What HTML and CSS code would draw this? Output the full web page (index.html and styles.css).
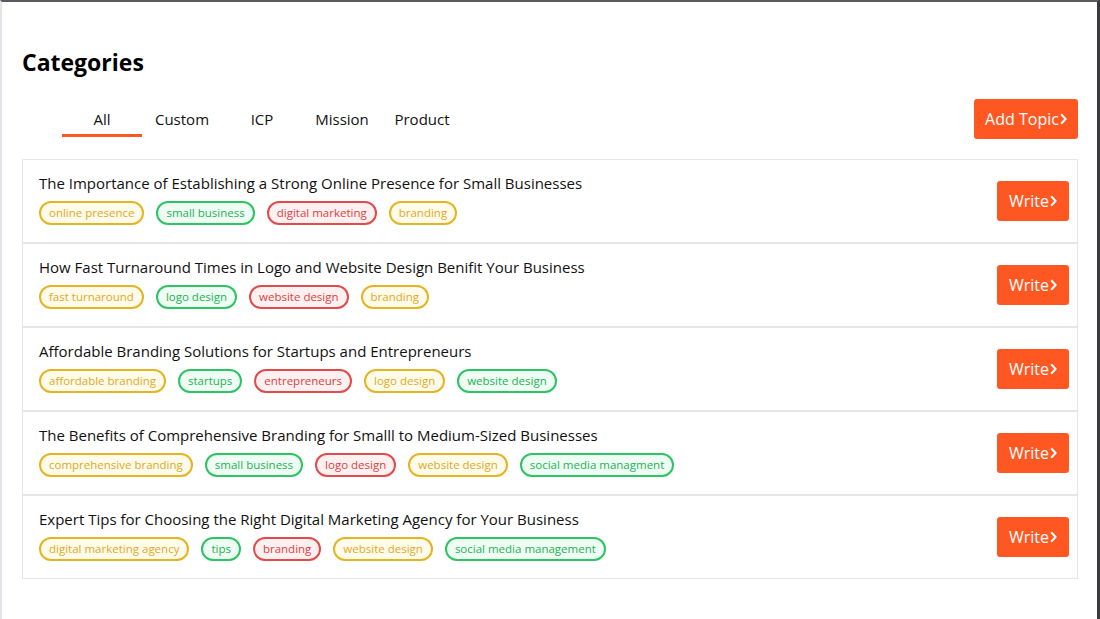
FILE: index.html
```html
<!DOCTYPE html>
<html>
<head>
<meta charset="utf-8">
<link rel="stylesheet" href="styles.css">
</head>
<body>
<div class="frame">
  <h1 class="title">Categories</h1>
  <div class="toolbar">
    <nav class="tabs">
      <span class="tab active">All</span>
      <span class="tab">Custom</span>
      <span class="tab">ICP</span>
      <span class="tab">Mission</span>
      <span class="tab">Product</span>
    </nav>
    <button class="btn btn-add">Add Topic<svg class="chev" viewBox="0 0 7 12" width="7" height="12"><path d="M1.2 1.2 L5.6 6 L1.2 10.8" fill="none" stroke="currentColor" stroke-width="2"/></svg></button>
  </div>
  <div class="list">
    <div class="card">
      <div class="card-body">
        <div class="card-title">The Importance of Establishing a Strong Online Presence for Small Businesses</div>
        <div class="tags">
          <span class="tag yellow">online presence</span>
          <span class="tag green">small business</span>
          <span class="tag red">digital marketing</span>
          <span class="tag yellow">branding</span>
        </div>
      </div>
      <button class="btn btn-write">Write<svg class="chev" viewBox="0 0 7 12" width="7" height="12"><path d="M1.2 1.2 L5.6 6 L1.2 10.8" fill="none" stroke="currentColor" stroke-width="2"/></svg></button>
    </div>
    <div class="card">
      <div class="card-body">
        <div class="card-title">How Fast Turnaround Times in Logo and Website Design Benifit Your Business</div>
        <div class="tags">
          <span class="tag yellow">fast turnaround</span>
          <span class="tag green">logo design</span>
          <span class="tag red">website design</span>
          <span class="tag yellow">branding</span>
        </div>
      </div>
      <button class="btn btn-write">Write<svg class="chev" viewBox="0 0 7 12" width="7" height="12"><path d="M1.2 1.2 L5.6 6 L1.2 10.8" fill="none" stroke="currentColor" stroke-width="2"/></svg></button>
    </div>
    <div class="card">
      <div class="card-body">
        <div class="card-title">Affordable Branding Solutions for Startups and Entrepreneurs</div>
        <div class="tags">
          <span class="tag yellow">affordable branding</span>
          <span class="tag green">startups</span>
          <span class="tag red">entrepreneurs</span>
          <span class="tag yellow">logo design</span>
          <span class="tag green">website design</span>
        </div>
      </div>
      <button class="btn btn-write">Write<svg class="chev" viewBox="0 0 7 12" width="7" height="12"><path d="M1.2 1.2 L5.6 6 L1.2 10.8" fill="none" stroke="currentColor" stroke-width="2"/></svg></button>
    </div>
    <div class="card">
      <div class="card-body">
        <div class="card-title">The Benefits of Comprehensive Branding for Smalll to Medium-Sized Businesses</div>
        <div class="tags">
          <span class="tag yellow">comprehensive branding</span>
          <span class="tag green">small business</span>
          <span class="tag red">logo design</span>
          <span class="tag yellow">website design</span>
          <span class="tag green">social media managment</span>
        </div>
      </div>
      <button class="btn btn-write">Write<svg class="chev" viewBox="0 0 7 12" width="7" height="12"><path d="M1.2 1.2 L5.6 6 L1.2 10.8" fill="none" stroke="currentColor" stroke-width="2"/></svg></button>
    </div>
    <div class="card">
      <div class="card-body">
        <div class="card-title">Expert Tips for Choosing the Right Digital Marketing Agency for Your Business</div>
        <div class="tags">
          <span class="tag yellow">digital marketing agency</span>
          <span class="tag green">tips</span>
          <span class="tag red">branding</span>
          <span class="tag yellow">website design</span>
          <span class="tag green">social media management</span>
        </div>
      </div>
      <button class="btn btn-write">Write<svg class="chev" viewBox="0 0 7 12" width="7" height="12"><path d="M1.2 1.2 L5.6 6 L1.2 10.8" fill="none" stroke="currentColor" stroke-width="2"/></svg></button>
    </div>
  </div>
</div>
</body>
</html>
```
FILE: styles.css
```css
* { box-sizing: border-box; }
html, body { margin: 0; padding: 0; height: 100%; }
body {
  font-family: "Open Sans", "Noto Sans", sans-serif;
  color: #111;
  background: #fff;
}
.frame {
  height: 619px;
  border-top: 2px solid #5c5c60;
  border-left: 2px solid #e4e4ea;
  border-right: 3px solid #3a3a3e;
  padding: 45px 19px 0 20px;
  overflow: hidden;
}
.title {
  margin: 0;
  font-size: 23px;
  line-height: 30px;
  font-weight: 700;
  color: #000;
}
.toolbar {
  margin-top: 22px;
  display: flex;
  justify-content: space-between;
  align-items: flex-start;
}
.tabs {
  display: flex;
  margin-left: 40px;
}
.tab {
  width: 80px;
  text-align: center;
  font-size: 15px;
  line-height: 24px;
  padding: 8px 0 3px;
  border-bottom: 3px solid transparent;
}
.tab.active { border-bottom-color: #ff5722; }
.btn {
  display: inline-flex;
  align-items: center;
  justify-content: center;
  height: 40px;
  border: none;
  border-radius: 3px;
  background: #ff5722;
  color: #fff;
  font-family: inherit;
  font-size: 16px;
  padding: 0;
  cursor: pointer;
}
.btn-add { width: 104px; }
.btn-write { width: 72px; flex: none; margin-right: 8px; }
.chev { margin-left: 1px; margin-top: -1px; }
.list {
  margin-top: 20px;
  display: flex;
  flex-direction: column;
}
.card {
  height: 84px;
  border: 1px solid #e6e6e6;
  display: flex;
  align-items: center;
  justify-content: space-between;
}
.card-body {
  padding: 13px 0 16px 16px;
  align-self: stretch;
}
.card-title {
  font-size: 15px;
  line-height: 20px;
  margin-bottom: 8px;
}
.tags {
  display: flex;
  gap: 12px;
}
.tag {
  height: 24px;
  border: 2px solid;
  border-radius: 12px;
  font-size: 11.5px;
  line-height: 20px;
  padding: 0 8px;
  white-space: nowrap;
}
.tag.yellow { border-color: #e5b423; color: #e0a91a; background: #fffbea; }
.tag.green { border-color: #2dc464; color: #22b357; background: #effcf3; }
.tag.red { border-color: #e24b4b; color: #e03e3e; background: #fdf0f0; }
```
